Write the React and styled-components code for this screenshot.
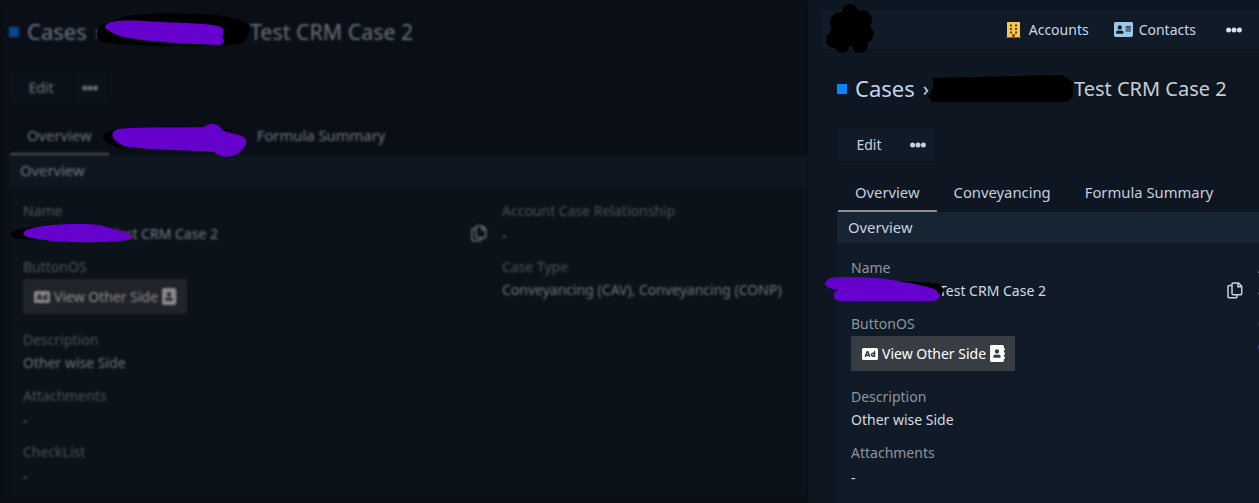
import React from 'react';
import styled, { createGlobalStyle } from 'styled-components';
import { FaAd, FaAddressBook, FaAddressCard } from 'react-icons/fa';

const GlobalStyle = createGlobalStyle`
  html, body {
    margin: 0;
    padding: 0;
    background: #0e1621;
  }
  * {
    box-sizing: border-box;
  }
`;

const DotsIcon = () => (
  <svg width="16" height="6" viewBox="0 0 16 6" fill="currentColor">
    <circle cx="2.6" cy="3" r="2.5" />
    <circle cx="8" cy="3" r="2.5" />
    <circle cx="13.4" cy="3" r="2.5" />
  </svg>
);

const CopyIcon = () => (
  <svg width="16" height="17" viewBox="0 0 16 17" fill="none" stroke="currentColor" strokeWidth="1.5">
    <path d="M5 3.4H2.2a1.2 1.2 0 0 0-1.2 1.2v10a1.2 1.2 0 0 0 1.2 1.2h6.6a1.2 1.2 0 0 0 1.2-1.2v-1.8" />
    <path d="M6.2 1h5.3l3.2 3.2v7.3a1.2 1.2 0 0 1-1.2 1.2H6.2A1.2 1.2 0 0 1 5 11.5V2.2A1.2 1.2 0 0 1 6.2 1z" />
    <path d="M11 1v3.8h3.7" />
  </svg>
);

const BuildingIcon = () => (
  <svg width="15" height="16" viewBox="0 0 15 16">
    <rect x="1" y="0" width="13" height="15.2" fill="#f2c94c" />
    <rect x="0" y="15" width="15" height="1" fill="#b5482a" />
    <g fill="#6b3b1f">
      <rect x="4" y="2.5" width="2" height="2" />
      <rect x="9" y="2.5" width="2" height="2" />
      <rect x="4" y="6" width="2" height="2" />
      <rect x="9" y="6" width="2" height="2" />
      <rect x="4" y="9.5" width="2" height="2" />
      <rect x="9" y="9.5" width="2" height="2" />
    </g>
    <rect x="6.2" y="12" width="2.6" height="3.2" fill="#a9381f" />
  </svg>
);

const Root = styled.div`
  display: flex;
  width: 1259px;
  height: 503px;
  overflow: hidden;
  font-family: "Noto Sans", "Open Sans", sans-serif;
`;

const Pane = styled.div`
  position: relative;
  flex: 0 0 ${(p) => p.$width}px;
  height: 503px;
  overflow: hidden;
  background: ${(p) => (p.$dim ? '#070a0e' : '#0e1621')};
`;

const Dimmer = styled.div`
  height: 100%;
  background: #0e1621;
  ${(p) => p.$dim && 'opacity: 0.52; filter: blur(0.9px);'}
`;

const TopBar = styled.div`
  display: flex;
  align-items: center;
  justify-content: flex-end;
  height: 39px;
  margin: 10px 0 0 14px;
  padding-right: 17px;
  background: #111b27;
`;

const TopLink = styled.div`
  display: flex;
  align-items: center;
  gap: ${(p) => p.$gap}px;
  margin-right: ${(p) => p.$after}px;
  color: #c8d8ea;
  font-size: 14px;
`;

const TopDots = styled.div`
  display: flex;
  color: #d6dee8;
`;

const Page = styled.div`
  padding: ${(p) => p.$top}px 0 0 ${(p) => p.$left}px;
`;

const TitleRow = styled.div`
  display: flex;
  align-items: center;
  height: 34px;
  font-size: 22px;
  white-space: nowrap;
`;

const Square = styled.span`
  width: 10px;
  height: 10px;
  margin: 1px 8px 0 0;
  background: #0a84ff;
`;

const Crumb = styled.span`
  color: #c3d4ee;
`;

const Chevron = styled.span`
  margin: 0 8px;
  color: #c3d4ee;
  font-size: 20px;
`;

const HiddenName = styled.span`
  display: inline-block;
  width: ${(p) => p.$width}px;
`;

const CaseName = styled.span`
  color: #c9ced4;
  font-size: ${(p) => p.$size}px;
`;

const Actions = styled.div`
  display: flex;
  gap: 1px;
  margin: 23px 0 15px 1px;
`;

const ActionButton = styled.div`
  display: flex;
  align-items: center;
  justify-content: center;
  width: ${(p) => p.$width}px;
  height: 33px;
  background: #111b27;
  color: #c9d1da;
  font-size: 14px;
`;

const Tabs = styled.div`
  display: flex;
  margin-left: 1px;
`;

const Tab = styled.div`
  height: 36px;
  padding: 0 17px;
  border-bottom: 2px solid ${(p) => (p.$active ? '#8b8f94' : 'transparent')};
  color: #c3d0de;
  font-size: 14.8px;
  line-height: 33px;
`;

const Card = styled.div`
  background: #111b27;
`;

const SectionHeader = styled.div`
  height: 31px;
  padding-left: 11px;
  background: #172433;
  color: #c6d3e0;
  font-size: 14.8px;
  line-height: 30px;
`;

const Columns = styled.div`
  display: grid;
  grid-template-columns: ${(p) => p.$col}px 600px;
  padding: 13px 0 ${(p) => p.$bottom}px 14px;
`;

const Field = styled.div`
  margin-bottom: ${(p) => (p.$tall ? 14 : 10)}px;
`;

const Label = styled.div`
  height: 23px;
  color: #8d96a0;
  font-size: 14px;
  line-height: 23px;
  white-space: nowrap;
`;

const Value = styled.div`
  display: flex;
  justify-content: space-between;
  align-items: center;
  height: 23px;
  color: #d3dae2;
  font-size: 14px;
  line-height: 23px;
  white-space: nowrap;
`;

const EmptyValue = styled(Value)`
  padding-top: 3px;
`;

const NameText = styled.span`
  padding-left: 88px;
`;

const CopyButton = styled.span`
  display: flex;
  margin-right: 15px;
  color: #c8d2dc;
`;

const LinkButton = styled.div`
  display: inline-flex;
  align-items: center;
  gap: 3px;
  height: 35px;
  margin-top: 1px;
  padding: 0 9px 0 11px;
  background: #383c43;
  color: #fff;
  font-size: 14px;
  white-space: nowrap;
`;

const AdMark = styled(FaAd)`
  margin-right: 1px;
`;

const Scribble = styled.svg`
  position: absolute;
  top: 0;
  left: 0;
  pointer-events: none;
  ${(p) => p.$dim && 'filter: blur(0.6px);'}
`;

const CaseView = ({ top, left, col, nameGap, nameSize, checklist }) => (
  <Page $top={top} $left={left}>
    <TitleRow>
      <Square />
      <Crumb>Cases</Crumb>
      <Chevron>›</Chevron>
      <HiddenName $width={nameGap} />
      <CaseName $size={nameSize}>Test CRM Case 2</CaseName>
    </TitleRow>
    <Actions>
      <ActionButton $width={62}>Edit</ActionButton>
      <ActionButton $width={33}><DotsIcon /></ActionButton>
    </Actions>
    <Tabs>
      <Tab $active>Overview</Tab>
      <Tab>Conveyancing</Tab>
      <Tab>Formula Summary</Tab>
    </Tabs>
    <Card>
      <SectionHeader>Overview</SectionHeader>
      <Columns $col={col} $bottom={checklist ? 0 : 40}>
        <div>
          <Field>
            <Label>Name</Label>
            <Value>
              <NameText>Test CRM Case 2</NameText>
              <CopyButton><CopyIcon /></CopyButton>
            </Value>
          </Field>
          <Field $tall>
            <Label>ButtonOS</Label>
            <LinkButton>
              <AdMark size={16} />
              View Other Side
              <FaAddressBook size={17} />
            </LinkButton>
          </Field>
          <Field>
            <Label>Description</Label>
            <Value>Other wise Side</Value>
          </Field>
          <Field>
            <Label>Attachments</Label>
            <EmptyValue>-</EmptyValue>
          </Field>
          {checklist && (
            <Field>
              <Label>CheckList</Label>
              <EmptyValue>-</EmptyValue>
            </Field>
          )}
        </div>
        <div>
          <Field>
            <Label>Account Case Relationship</Label>
            <EmptyValue>-</EmptyValue>
          </Field>
          <Field>
            <Label>Case Type</Label>
            <Value>Conveyancing (CAV), Conveyancing (CONP)</Value>
          </Field>
        </div>
      </Columns>
    </Card>
  </Page>
);

export default function App() {
  return (
    <Root>
      <GlobalStyle />
      <Pane $width={808} $dim>
        <Dimmer $dim>
          <CaseView top={14} left={9} col={479} nameGap={141} nameSize={21.4} checklist />
        </Dimmer>
        <Scribble $dim width="808" height="503" viewBox="0 0 808 503">
          <path d="M98 30C100 24 110 22 117 20C120 14 160 12 200 14C232 15 252 22 250 29C248 36 246 42 240 44C210 47 130 47 102 42C96 38 96 34 98 30Z" fill="#000" />
          <path d="M106 25C110 19 135 20 160 22C190 23 215 24 221 27C225 30 224 34 222 37C225 40 225 44 219 45C190 44 150 42 130 38C115 36 112 32 108 30C105 29 105 27 106 25Z" fill="#6600cc" />
          <path d="M104 134C112 125 210 125 232 130L226 150L120 148C110 146 100 140 104 134Z" fill="#000" />
          <path d="M118 129C150 126 190 128 204 127C208 122 220 123 222 130C232 135 250 134 246 144C240 158 222 160 214 152C190 150 140 150 124 146C112 140 108 133 118 129Z" fill="#6600cc" />
          <path d="M11 233C16 225 90 223 104 226C112 228 130 232 130 238C130 244 60 243 44 240C30 240 8 240 11 233Z" fill="#000" />
          <path d="M24 232C30 224 90 222 104 226C112 229 132 232 132 238C130 243 70 243 52 241C40 239 20 238 24 232Z" fill="#6600cc" />
        </Scribble>
      </Pane>
      <Pane $width={451}>
        <TopBar>
          <TopLink $gap={8} $after={25}><BuildingIcon />Accounts</TopLink>
          <TopLink $gap={6} $after={30}><FaAddressCard size={19} color="#9cc7e8" />Contacts</TopLink>
          <TopDots><DotsIcon /></TopDots>
        </TopBar>
        <CaseView top={22} left={29} col={407} nameGap={137} nameSize={20} />
        <Scribble width="451" height="503" viewBox="0 0 451 503" fill="#000">
          <circle cx="42" cy="12" r="8" />
          <circle cx="32" cy="22" r="10" />
          <circle cx="54" cy="20" r="10" />
          <circle cx="44" cy="28" r="15" />
          <circle cx="57" cy="34" r="9" />
          <circle cx="36" cy="34" r="14" />
          <circle cx="26" cy="40" r="8" />
          <circle cx="34" cy="46" r="7" />
          <circle cx="52" cy="45" r="8" />
          <path d="M125 78L254 75L265 82L265 97L259 102L124 102L120 97L125 88Z" />
          <path d="M90 281L130 283L137 290L130 298L90 298Z" />
          <path d="M22 278C40 276 70 277 90 281C105 284 120 286 128 290L132 295C132 300 128 301 120 301L32 301C24 301 24 292 30 290C22 289 14 286 18 281Z" fill="#6600cc" />
        </Scribble>
      </Pane>
    </Root>
  );
}
